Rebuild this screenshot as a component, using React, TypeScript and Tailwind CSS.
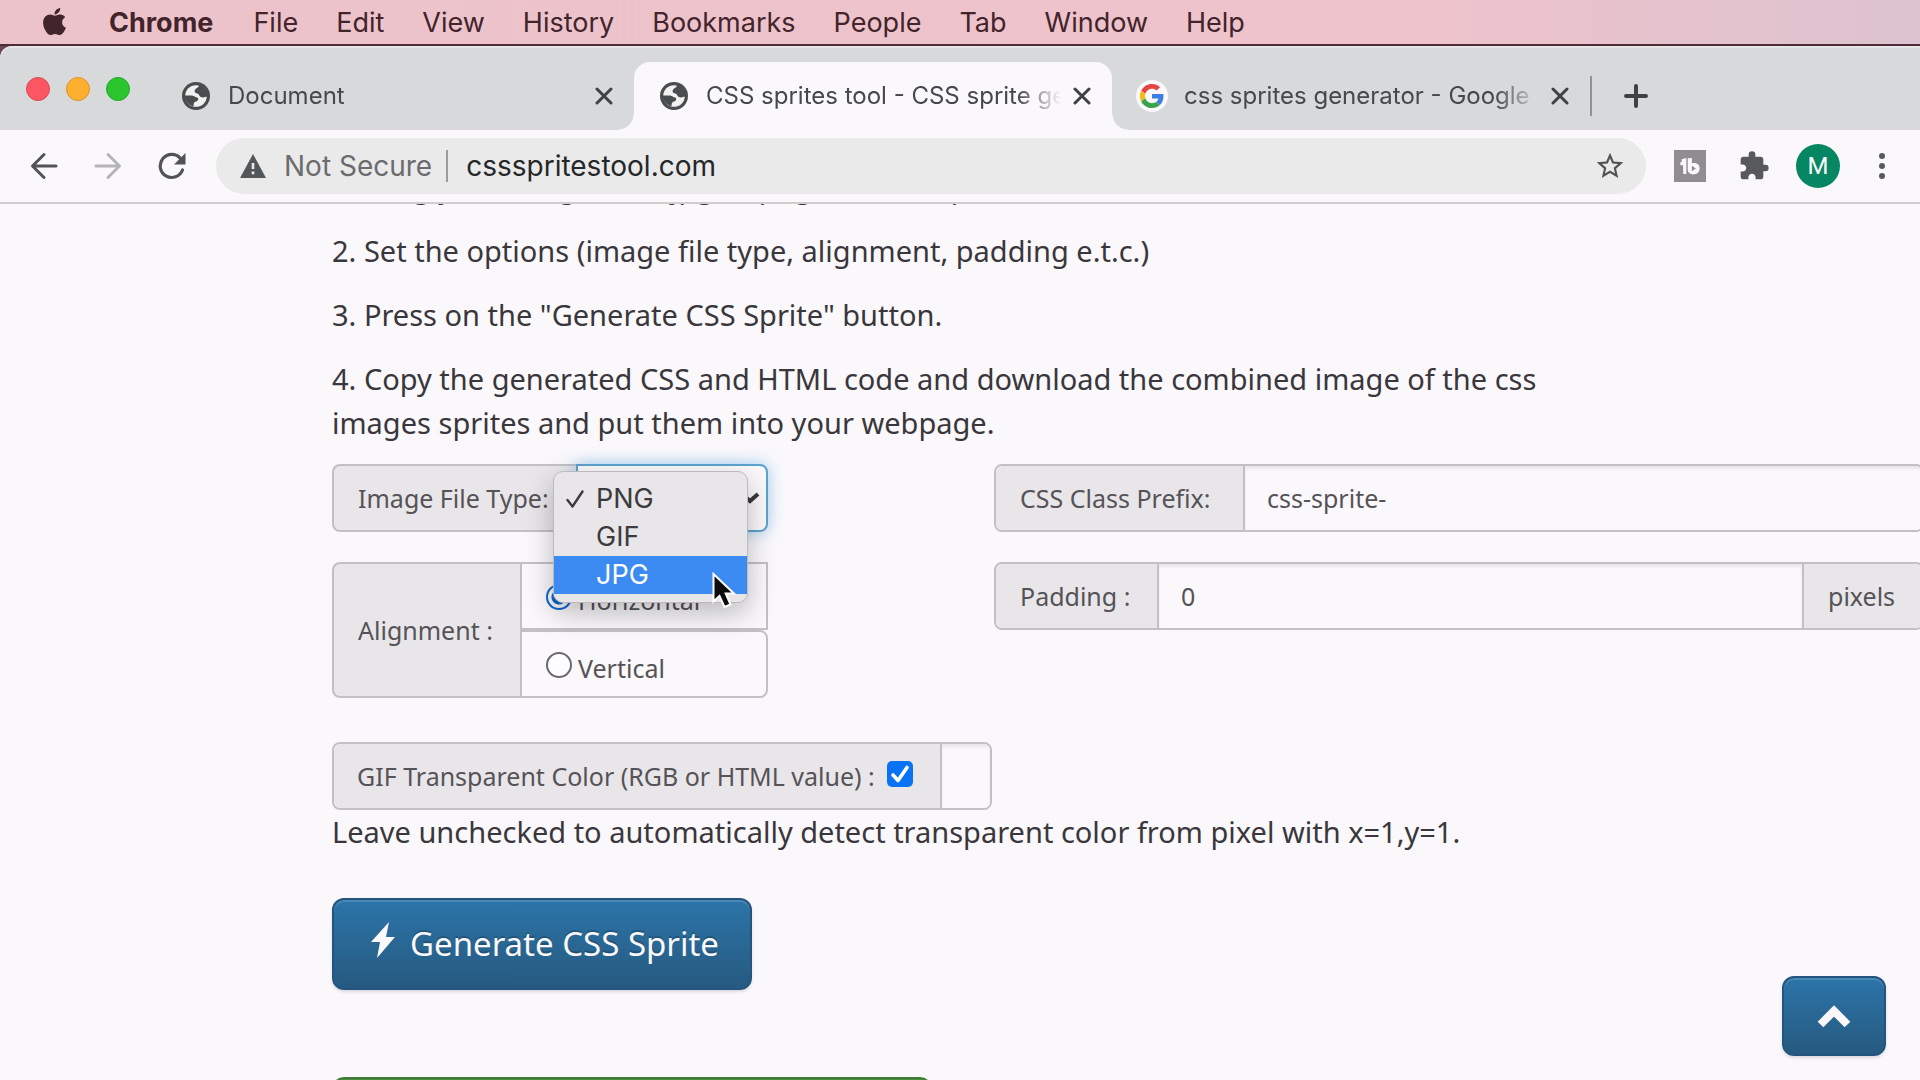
import React from 'react';
import { FaApple } from 'react-icons/fa';
import { MdStarBorder, MdExtension } from 'react-icons/md';

const menus = ['File', 'Edit', 'View', 'History', 'Bookmarks', 'People', 'Tab', 'Window', 'Help'];

function Globe() {
  return (
    <svg viewBox="0 0 28 28" className="size-7 shrink-0" aria-hidden="true">
      <circle cx="14" cy="14" r="14" fill="#4a4d4d" />
      <circle cx="14" cy="14" r="10.8" fill="#f1f1f2" />
      <path d="M17 3C17 6 13 6 12.6 9c0 2.500 2.400 2 4 3.200 1 2.300 2.400 3.300 4.400 3.300 1.500 0 2.500-1 4.500-1A11.500 11.500 0 0 0 17 3Z" fill="#4a4d4d" />
      <path d="M2.500 13.500H9.500C12 13.500 12.500 15 15 15.500c2 .5 1.500 3.500-1 4-2 .5-2.500 2-2.500 5A11.500 11.500 0 0 1 2.500 13.500Z" fill="#4a4d4d" />
    </svg>
  );
}

function GoogleIcon() {
  return (
    <span className="flex size-8 shrink-0 items-center justify-center rounded-full bg-[#faf8fb]">
      <svg viewBox="0 0 48 48" className="size-6" aria-hidden="true">
        <path fill="#e54345" d="M24 9.500c3.540 0 6.710 1.220 9.210 3.600l6.850-6.850C35.900 2.380 30.470 0 24 0 14.620 0 6.510 5.380 2.560 13.220l7.980 6.190C12.430 13.720 17.740 9.500 24 9.500z" />
        <path fill="#3b7de0" d="M46.980 24.550c0-1.570-.15-3.090-.38-4.550H24v9.020h12.940c-.58 2.960-2.260 5.480-4.780 7.180l7.730 6c4.510-4.180 7.090-10.360 7.090-17.650z" />
        <path fill="#f9b90f" d="M10.530 28.590c-.48-1.450-.76-2.990-.76-4.590s.27-3.140.76-4.590l-7.980-6.190C.92 16.460 0 20.120 0 24c0 3.880.92 7.540 2.560 10.780l7.970-6.190z" />
        <path fill="#3aa34c" d="M24 48c6.480 0 11.930-2.130 15.890-5.810l-7.730-6c-2.150 1.450-4.920 2.300-8.160 2.300-6.260 0-11.570-4.220-13.470-9.910l-7.980 6.190C6.510 42.620 14.620 48 24 48z" />
      </svg>
    </span>
  );
}

function CloseIcon() {
  return (
    <svg viewBox="0 0 18 18" className="size-[18px]" fill="none" stroke="#3f4244" strokeWidth="3" strokeLinecap="round" aria-hidden="true">
      <path d="M2 2l14 14M16 2L2 16" />
    </svg>
  );
}

function Tab({ title, icon, active }: { title: string; icon: React.ReactNode; active?: boolean }) {
  return (
    <div
      className={
        'relative flex h-[68px] min-w-0 max-w-[478px] flex-1 items-center pl-[26px] pr-[21px] ' +
        (active
          ? 'rounded-t-2xl bg-[#faf8fb] before:absolute before:bottom-0 before:-left-4 before:size-4 before:bg-[radial-gradient(circle_at_0_0,transparent_15px,#faf8fb_16px)] after:absolute after:bottom-0 after:-right-4 after:size-4 after:bg-[radial-gradient(circle_at_100%_0,transparent_15px,#faf8fb_16px)]'
          : '')
      }
    >
      <span className="-mx-1 flex w-9 shrink-0 justify-center">{icon}</span>
      <a href="#" className="ml-[18px] min-w-0 flex-1 overflow-hidden whitespace-nowrap text-2xl text-[#46484a] [mask-image:linear-gradient(to_right,#000_calc(100%-44px),transparent)]">
        {title}
      </a>
      <button aria-label={'Close ' + title} className="ml-3 shrink-0">
        <CloseIcon />
      </button>
    </div>
  );
}

const addon = 'flex shrink-0 items-center bg-[#e8e6e9] text-[25px] text-[#555357]';
const group = 'flex h-[68px] overflow-hidden rounded-lg border-2 border-[#c2c0c3]';
const field = 'min-w-0 flex-1 border-l-2 border-[#c2c0c3] bg-[#faf8fb] px-[22px] text-[25px] text-[#555357] shadow-[inset_0_3px_3px_rgba(0,0,0,0.07)] outline-none';

export default function App() {
  return (
    <div className="flex h-screen flex-col overflow-hidden bg-[#faf8fb] font-['Inter',sans-serif]">
      <nav className="flex h-11 shrink-0 items-center bg-linear-to-r from-[#edc3cb] from-0% via-[#eec3cc] via-75% to-[#dcc3cf] pl-[39px] pt-0.5 text-[27px] text-[#42242b]">
        <FaApple className="mb-1 mr-[39px] size-[31px]" />
        <button className="mr-10 font-bold">Chrome</button>
        <div className="flex gap-[38px]">
          {menus.map((m) => (
            <button key={m}>{m}</button>
          ))}
        </div>
      </nav>

      <div className="shrink-0 border-t-2 border-[#4f2d36] bg-[#6b4450]">
        <div className="flex h-[84px] items-end rounded-tl-xl bg-[#d7d9da] pl-[26px] shadow-[inset_0_2px_0_#e6e6e8]">
          <div className="mr-[26px] flex h-[84px] items-center gap-4 pt-0.5">
            <button aria-label="Close window" className="size-6 rounded-full border border-[#dc4853] bg-[#fc5663]" />
            <button aria-label="Minimise window" className="size-6 rounded-full border border-[#dc9330] bg-[#fdaf30]" />
            <button aria-label="Zoom window" className="size-6 rounded-full border border-[#25a82a] bg-[#2bc52d]" />
          </div>
          <Tab title="Document" icon={<Globe />} />
          <Tab title="CSS sprites tool - CSS sprite generator" icon={<Globe />} active />
          <Tab title="css sprites generator - Google Search" icon={<GoogleIcon />} />
          <div className="flex h-[68px] shrink-0 items-center">
            <span className="h-10 w-0.5 bg-[#909294]" />
            <button aria-label="New tab" className="ml-8">
              <svg viewBox="0 0 24 24" className="size-6" fill="none" stroke="#3f4244" strokeWidth="4" strokeLinecap="round">
                <path d="M12 2v20M2 12h20" />
              </svg>
            </button>
          </div>
        </div>
      </div>

      <div className="flex h-[74px] shrink-0 items-center border-b-2 border-[#d0ced1] pl-[30px] pr-[29px]">
        <button aria-label="Back">
          <svg viewBox="0 0 28 28" className="size-7" fill="none" stroke="#515355" strokeWidth="3" strokeLinecap="round" strokeLinejoin="round">
            <path d="M26 14H3M14 2.500L2.500 14 14 25.500" />
          </svg>
        </button>
        <button aria-label="Forward" className="ml-9">
          <svg viewBox="0 0 28 28" className="size-7" fill="none" stroke="#b5b4b7" strokeWidth="3" strokeLinecap="round" strokeLinejoin="round">
            <path d="M2 14h23M14 2.500L25.500 14 14 25.500" />
          </svg>
        </button>
        <button aria-label="Reload" className="ml-9">
          <svg viewBox="0 0 28 28" className="size-7" fill="none">
            <path d="M24.500 18A11.500 11.500 0 1 1 22.500 6.500" stroke="#515355" strokeWidth="3.200" strokeLinecap="round" />
            <path d="M27.500 1v11.500H16Z" fill="#515355" />
          </svg>
        </button>
        <div className="ml-[30px] flex h-14 min-w-0 flex-1 items-center rounded-full bg-[#ebeaeb] pl-6 pr-5 text-[28px]">
          <svg viewBox="0 0 26 24" className="w-[26px] shrink-0" aria-hidden="true">
            <path d="M13 0L26 24H0Z" fill="#545759" />
            <path d="M11.700 9h2.600v6h-2.600zM11.700 17.500h2.600v2.800h-2.600z" fill="#ebeaeb" />
          </svg>
          <span className="ml-[18px] shrink-0 text-[#6a6c6e]">Not Secure</span>
          <span className="ml-3.5 h-8 w-0.5 shrink-0 bg-[#9c9c9e]" />
          <input aria-label="Address" defaultValue="cssspritestool.com" className="ml-[18px] min-w-0 flex-1 bg-transparent text-[#252729] outline-none" />
          <button aria-label="Bookmark this page">
            <MdStarBorder className="size-8 text-[#515355]" />
          </button>
        </div>
        <button aria-label="Extension" className="ml-7 flex size-8 items-center justify-center bg-[#8f8d90]">
          <svg viewBox="0 0 24 20" className="w-[22px]" aria-hidden="true">
            <path d="M3 2.500L8 1v17.500H4.500V9H1.500V5.500H3Z" fill="#faf8fb" />
            <path d="M9.500 1.500L14 1v6c5-1.500 8.500 1 8.500 5.500S19 19 15.500 19 9.500 17 9.500 13.500Z" fill="#faf8fb" />
            <path d="M14 9.500v6l4.500-3Z" fill="#8f8d90" />
          </svg>
        </button>
        <button aria-label="Extensions" className="ml-8">
          <MdExtension className="size-8 text-[#58595b]" />
        </button>
        <button aria-label="Profile" className="ml-[26px] flex size-11 items-center justify-center rounded-full bg-[#068663] font-['Roboto',sans-serif] text-2xl text-white">
          M
        </button>
        <button aria-label="More" className="ml-[33px] flex w-[18px] flex-col items-center gap-1">
          <span className="size-1.5 rounded-full bg-[#58595b]" />
          <span className="size-1.5 rounded-full bg-[#58595b]" />
          <span className="size-1.5 rounded-full bg-[#58595b]" />
        </button>
      </div>

      <main className="relative min-h-0 flex-1 overflow-hidden pl-[332px] font-['Noto_Sans',sans-serif] text-[29px] leading-[44px] text-[#39373b]">
        <div className="-mt-[39px] flex max-w-[1230px] flex-col gap-5">
          <p>1. Drag your image files, jpg or png, here to upload</p>
          <p>2. Set the options (image file type, alignment, padding e.t.c.)</p>
          <p>3. Press on the "Generate CSS Sprite" button.</p>
          <p>4. Copy the generated CSS and HTML code and download the combined image of the css images sprites and put them into your webpage.</p>
        </div>

        <div className="mt-[19px] grid grid-cols-[662px_1fr] gap-y-[30px]">
          <div className="relative flex h-[68px] w-[436px]">
            <label htmlFor="filetype" className={addon + ' w-[244px] rounded-l-lg border-2 border-r-0 border-[#c2c0c3] pl-6'}>
              Image File Type:
            </label>
            <select
              id="filetype"
              defaultValue="PNG"
              className="min-w-0 flex-1 appearance-none rounded-r-lg border-2 border-[#5ba3cf] bg-[#faf8fb] pl-6 text-[25px] shadow-[0_0_16px_rgba(102,175,233,0.6)] outline-none"
            >
              <option>PNG</option>
              <option>GIF</option>
              <option>JPG</option>
            </select>
            <svg viewBox="0 0 20 12" className="pointer-events-none absolute right-2 top-7 w-5" fill="none" stroke="#39373b" strokeWidth="4" aria-hidden="true">
              <path d="M2 2l8 7 8-7" />
            </svg>
            <ul
              role="listbox"
              aria-label="Image file type options"
              className="absolute left-[221px] top-[7px] z-10 w-[195px] rounded-[10px] border border-[#bcbabd] bg-[#e8e6e8] py-2 font-['Inter',sans-serif] text-[27px] leading-[38px] text-[#3b3b3d] shadow-[0_10px_28px_rgba(0,0,0,0.26)]"
            >
              <li role="option" aria-selected="true" className="flex h-[38px] items-center pl-3">
                <svg viewBox="0 0 18 18" className="mr-3 w-[18px]" fill="none" stroke="#3b3b3d" strokeWidth="2.400" strokeLinecap="round" strokeLinejoin="round">
                  <path d="M1.500 10l5 6.500L16.500 1.500" />
                </svg>
                PNG
              </li>
              <li role="option" aria-selected="false" className="h-[38px] pl-[42px]">GIF</li>
              <li role="option" aria-selected="false" className="relative h-[38px] bg-[#3b8bf2] pl-[42px] text-white">
                JPG
                <svg viewBox="0 0 24 36" className="absolute left-[158px] top-4 w-6" aria-hidden="true">
                  <path d="M1.500 2v27.500l6-5.500 5 11 6-2.500-4.800-11H22Z" fill="#0c0c0c" stroke="#fff" strokeWidth="2" />
                </svg>
              </li>
            </ul>
          </div>

          <div className={group + ' -mr-1'}>
            <label htmlFor="prefix" className={addon + ' w-[247px] pl-6'}>CSS Class Prefix:</label>
            <input id="prefix" defaultValue="css-sprite-" className={field} />
          </div>

          <fieldset className="flex w-[436px]" aria-labelledby="alignment">
            <div id="alignment" className={addon + ' h-[136px] w-[188px] rounded-l-lg border-2 border-r-0 border-[#c2c0c3] pl-6'}>Alignment :</div>
            <div className="flex flex-1 flex-col text-[25px] text-[#555357]">
              <label className="flex h-[68px] items-center border-2 border-[#c2c0c3] pl-6 pt-2">
                <input type="radio" name="align" defaultChecked className="mb-1.5 mr-1.5 size-[26px] appearance-none rounded-full border-2 border-[#0d66d0] bg-[radial-gradient(circle,#0d66d0_7px,#faf8fb_8px)]" />
                Horizontal
              </label>
              <label className="flex h-[68px] items-center rounded-r-lg border-2 border-[#c2c0c3] pl-6 pt-2">
                <input type="radio" name="align" className="mb-1.5 mr-1.5 size-[26px] appearance-none rounded-full border-2 border-[#6b696d] bg-[#fdfcfe]" />
                Vertical
              </label>
            </div>
          </fieldset>

          <div className={group + ' -mr-1'}>
            <label htmlFor="padding" className={addon + ' w-[161px] pl-6'}>Padding :</label>
            <input id="padding" defaultValue="0" className={field} />
            <span className={addon + ' w-[120px] border-l-2 border-[#c2c0c3] pl-6'}>pixels</span>
          </div>
        </div>

        <div className={group + ' mt-11 w-[660px]'}>
          <label className={addon + ' w-[606px] pl-[23px]'}>
            GIF Transparent Color (RGB or HTML value) :
            <input type="checkbox" defaultChecked className="mb-1 ml-3 size-[26px] appearance-none rounded-[5px] bg-[#0a72f5]" />
            <svg viewBox="0 0 26 26" className="-ml-[26px] mb-1 size-[26px]" fill="none" stroke="#fff" strokeWidth="3.600" strokeLinecap="round" strokeLinejoin="round" aria-hidden="true">
              <path d="M6 14l5 5.500L20 6.500" />
            </svg>
          </label>
          <input aria-label="Transparent color" className="min-w-0 flex-1 border-l-2 border-[#c2c0c3] bg-[#faf8fb] shadow-[inset_0_3px_3px_rgba(0,0,0,0.07)] outline-none" />
        </div>
        <p>Leave unchecked to automatically detect transparent color from pixel with x=1,y=1.</p>

        <button className="mt-11 flex h-[92px] w-[420px] items-center rounded-xl border-2 border-[#245580] bg-linear-to-b from-[#2c74a9] to-[#265a80] pl-9 text-[33px] text-[#faf8fb] shadow-[inset_0_2px_0_rgba(255,255,255,0.15),0_2px_3px_rgba(0,0,0,0.12)] [text-shadow:0_-2px_0_rgba(0,0,0,0.2)]">
          <svg viewBox="0 0 26 36" className="mb-2 mr-3.5 w-[26px]" aria-hidden="true">
            <path d="M19 0L1 20h9L7 36 25 15h-9Z" fill="#faf8fb" />
          </svg>
          Generate CSS Sprite
        </button>

        <div className="mt-[87px] h-16 w-[600px] rounded-xl border-2 border-[#3e7a35] bg-[#4c8c42]" />

        <button aria-label="Back to top" className="absolute bottom-6 right-[34px] flex h-20 w-[104px] items-center justify-center rounded-xl border-2 border-[#245580] bg-linear-to-b from-[#2c74a9] to-[#265a80] shadow-[inset_0_2px_0_rgba(255,255,255,0.15),0_2px_3px_rgba(0,0,0,0.12)]">
          <svg viewBox="0 0 34 24" className="w-[34px]" fill="none" stroke="#faf8fb" strokeWidth="8" aria-hidden="true">
            <path d="M3.500 20.500L17 7l13.500 13.500" />
          </svg>
        </button>
      </main>
    </div>
  );
}
